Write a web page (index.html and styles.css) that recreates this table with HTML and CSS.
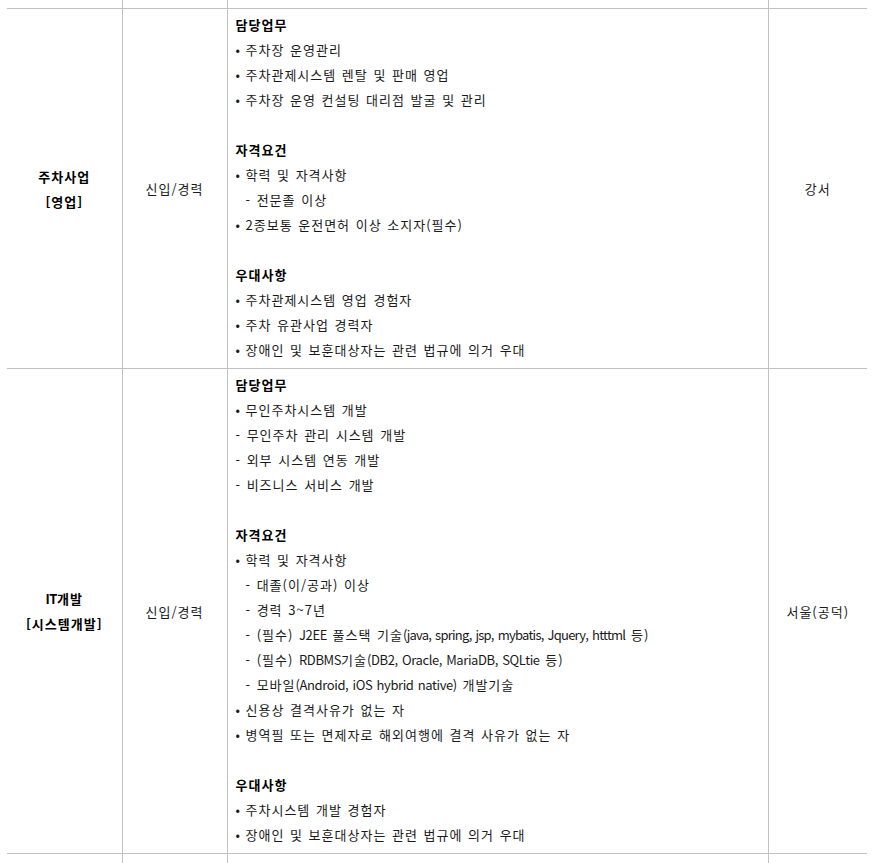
FILE: index.html
```html
<!DOCTYPE html>
<html lang="ko">
<head>
<meta charset="utf-8">
<title>채용 직무</title>
<link rel="stylesheet" href="styles.css">
</head>
<body>
<table class="jobs">
  <colgroup>
    <col class="c-name">
    <col class="c-type">
    <col class="c-desc">
    <col class="c-loc">
  </colgroup>
  <tbody>
    <tr class="edge top">
      <td></td><td></td><td></td><td></td>
    </tr>
    <tr>
      <td class="name">주차사업<br>[영업]</td>
      <td class="type">신입/경력</td>
      <td class="desc">
        <p class="head">담당업무</p>
        <p><span class="b">•</span>주차장 운영관리</p>
        <p><span class="b">•</span>주차관제시스템 렌탈 및 판매 영업</p>
        <p><span class="b">•</span>주차장 운영 컨설팅 대리점 발굴 및 관리</p>
        <p class="gap"></p>
        <p class="head">자격요건</p>
        <p><span class="b">•</span>학력 및 자격사항</p>
        <p class="sub">- 전문졸 이상</p>
        <p><span class="b">•</span>2종보통 운전면허 이상 소지자(필수)</p>
        <p class="gap"></p>
        <p class="head">우대사항</p>
        <p><span class="b">•</span>주차관제시스템 영업 경험자</p>
        <p><span class="b">•</span>주차 유관사업 경력자</p>
        <p><span class="b">•</span>장애인 및 보훈대상자는 관련 법규에 의거 우대</p>
      </td>
      <td class="loc">강서</td>
    </tr>
    <tr>
      <td class="name"><span class="lat">IT</span>개발<br>[시스템개발]</td>
      <td class="type">신입/경력</td>
      <td class="desc">
        <p class="head">담당업무</p>
        <p><span class="b">•</span>무인주차시스템 개발</p>
        <p>- 무인주차 관리 시스템 개발</p>
        <p>- 외부 시스템 연동 개발</p>
        <p>- 비즈니스 서비스 개발</p>
        <p class="gap"></p>
        <p class="head">자격요건</p>
        <p><span class="b">•</span>학력 및 자격사항</p>
        <p class="sub">- 대졸(이/공과) 이상</p>
        <p class="sub">- 경력 3~7년</p>
        <p class="sub">- (필수) <span class="lat">J2EE</span> 풀스택 기술<span class="lat tight">(java, spring, jsp, mybatis, Jquery, htttml</span> 등)</p>
        <p class="sub">- (필수) <span class="lat">RDBMS</span>기술<span class="lat">(DB2, Oracle, MariaDB, SQLtie</span> 등)</p>
        <p class="sub">- 모바일<span class="lat">(Android, iOS hybrid native)</span> 개발기술</p>
        <p><span class="b">•</span>신용상 결격사유가 없는 자</p>
        <p><span class="b">•</span>병역필 또는 면제자로 해외여행에 결격 사유가 없는 자</p>
        <p class="gap"></p>
        <p class="head">우대사항</p>
        <p><span class="b">•</span>주차시스템 개발 경험자</p>
        <p><span class="b">•</span>장애인 및 보훈대상자는 관련 법규에 의거 우대</p>
      </td>
      <td class="loc">서울(공덕)</td>
    </tr>
    <tr class="edge bottom">
      <td></td><td></td><td></td><td></td>
    </tr>
  </tbody>
</table>
</body>
</html>
```

FILE: styles.css
```css
html, body {
  margin: 0;
  padding: 0;
  background: #ffffff;
}

body {
  font-family: "Noto Sans CJK KR", "Noto Sans", sans-serif;
  font-size: 13px;
  color: #1a1a1a;
  letter-spacing: 1px;
  word-spacing: 1px;
  overflow: hidden;
}

.jobs {
  margin-left: 7px;
  width: 860px;
  table-layout: fixed;
  border-collapse: collapse;
}

.c-name { width: 115px; }
.c-type { width: 105px; }
.c-desc { width: 541px; }
.c-loc { width: 99px; }

.jobs td {
  border-left: 1px solid #c2c2c2;
  border-bottom: 1px solid #c2c2c2;
  padding: 0;
  vertical-align: middle;
  text-align: center;
  line-height: 25px;
}

.jobs td:first-child {
  border-left: none;
}

.jobs .edge td {
  height: 8px;
}

.jobs .edge.bottom td {
  height: 20px;
  border-bottom: none;
}

.name {
  font-weight: bold;
  color: #000000;
}

.desc {
  text-align: left !important;
  padding: 3px 7px 6px 8px !important;
}

.desc p {
  margin: 0;
  height: 25px;
  white-space: nowrap;
}

.desc .head {
  font-weight: bold;
  color: #000000;
}

.desc .b {
  display: inline-block;
  width: 10px;
}

.desc .sub {
  padding-left: 10px;
}

.lat {
  letter-spacing: -0.4px;
}

.lat.tight {
  letter-spacing: -0.75px;
}
```
